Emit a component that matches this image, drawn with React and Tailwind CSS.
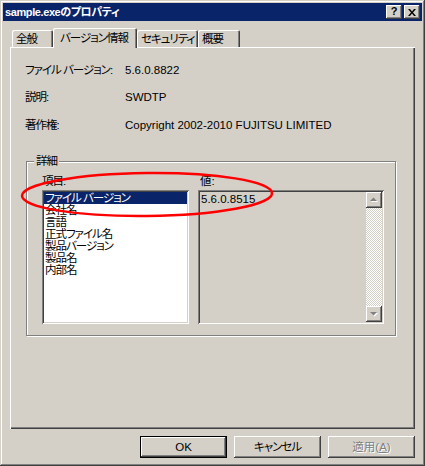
import React from 'react';

// --- classic 3D borders ---
const raised = 'shadow-[inset_-1px_-1px_#404040,inset_1px_1px_#fff,inset_-2px_-2px_#808080,inset_2px_2px_#d4d0c8]';
const sunken = 'shadow-[inset_1px_1px_#808080,inset_-1px_-1px_#fff,inset_2px_2px_#404040,inset_-2px_-2px_#d4d0c8]';

const infoRows = [
  { label: 'ファイル バージョン:', value: '5.6.0.8822' },
  { label: '説明:', value: 'SWDTP' },
  { label: '著作権:', value: 'Copyright 2002-2010 FUJITSU LIMITED' },
];

const items = ['ファイル バージョン', '会社名', '言語', '正式ファイル名', '製品バージョン', '製品名', '内部名'];

const tabs = [
  { label: '全般', w: 'w-[41px]' },
  { label: 'バージョン情報', w: 'w-[84px]', active: true },
  { label: 'セキュリティ', w: 'w-[61px]' },
  { label: '概要', w: 'w-[42px]' },
];

function Tab({ label, w, active }) {
  if (active) {
    return (
      <div className={`${w} h-[20px] -mb-px relative z-10 bg-[#d4d0c8] rounded-t-[2px] shadow-[inset_1px_1px_#fff,inset_-1px_0_#404040,inset_-2px_0_#808080] pl-[7px] pt-[4px] whitespace-nowrap tracking-[-1px]`}>
        {label}
      </div>
    );
  }
  return (
    <div className={`${w} h-[17px] bg-[#d4d0c8] rounded-t-[2px] shadow-[inset_1px_1px_#fff,inset_-1px_0_#404040,inset_-2px_0_#808080] pl-[4px] pt-[3px] whitespace-nowrap tracking-[-1px]`}>
      {label}
    </div>
  );
}

function ScrollArrow({ down }) {
  return (
    <div className={`w-[16px] h-[16px] bg-[#d4d0c8] ${raised} flex items-center justify-center`}>
      <svg width="8" height="6" viewBox="0 0 8 6">
        {down ? (
          <>
            <polygon points="1,2 8,2 4.5,5.5" fill="#fff" />
            <polygon points="0,1 7,1 3.5,4.5" fill="#808080" />
          </>
        ) : (
          <>
            <polygon points="4.5,1.5 8,5 1,5" fill="#fff" />
            <polygon points="3.5,0.5 7,4 0,4" fill="#808080" />
          </>
        )}
      </svg>
    </div>
  );
}

export default function App() {
  return (
    <div className={`relative w-[425px] h-[466px] bg-[#d4d0c8] p-[3px] flex flex-col text-[11.5px] leading-[12px] text-black font-['Liberation_Sans','Noto_Sans_CJK_JP',sans-serif] [font-feature-settings:'palt'] shadow-[inset_-1px_-1px_#404040,inset_1px_1px_#d4d0c8,inset_-2px_-2px_#808080,inset_2px_2px_#fff]`}>
      {/* Title bar */}
      <div className="h-[18px] bg-[#0a246a] flex items-center pl-[2px] pr-[2px]">
        <span className="text-white font-bold text-[11px] whitespace-nowrap tracking-[-0.4px]">sample.exeのプロパティ</span>
        <div className="ml-auto flex gap-[2px]">
          <div className={`w-[16px] h-[14px] bg-[#d4d0c8] ${raised} flex items-center justify-center font-bold text-[11px] leading-none pb-px`}>?</div>
          <div className={`w-[16px] h-[14px] bg-[#d4d0c8] ${raised} flex items-center justify-center`}>
            <svg width="8" height="7" viewBox="0 0 8 7">
              <path d="M0 0h2l2 2.5L6 0h2L5 3.5 8 7H6L4 4.5 2 7H0l3-3.5z" fill="#000" />
            </svg>
          </div>
        </div>
      </div>

      {/* Body */}
      <div className="flex-1 px-[7px] pt-[7px] flex flex-col">
        <div className="flex items-end h-[19px] pl-[2px]">
          {tabs.map((t) => (
            <Tab key={t.label} {...t} />
          ))}
        </div>

        <div className="h-[382px] bg-[#d4d0c8] shadow-[inset_1px_1px_#fff,inset_-1px_-1px_#404040,inset_-2px_-2px_#808080] pl-[15px] pt-[17px] flex flex-col">
          {infoRows.map((r, i) => (
            <div key={r.label} className={`flex h-[12px] whitespace-nowrap ${i === 0 ? '' : i === 1 ? 'mt-[15px]' : 'mt-[16px]'}`}>
              <span className="w-[100px] shrink-0 tracking-[-1px]">{r.label}</span>
              <span>{r.value}</span>
            </div>
          ))}

          {/* 詳細 group */}
          <div className="relative ml-px mt-[30px] w-[370px] h-[175px] border border-[#808080] shadow-[inset_1px_1px_#fff,1px_1px_#fff] pl-[15px] pt-[13px]">
            <span className="absolute left-[7px] -top-[7px] bg-[#d4d0c8] px-[2px] tracking-[-1px]">詳細</span>
            <div className="flex">
              <div className="w-[147px] flex flex-col">
                <span className="h-[12px] tracking-[-1px]">項目:</span>
                <div className={`mt-[3px] h-[134px] bg-white ${sunken} p-[2px] tracking-[-1px]`}>
                  {items.map((it, i) => (
                    <div key={it} className={`h-[12px] pl-px whitespace-nowrap ${i === 0 ? 'bg-[#0a246a] text-white' : ''}`}>
                      {it}
                    </div>
                  ))}
                </div>
              </div>
              <div className="ml-[9px] w-[186px] flex flex-col">
                <span className="h-[12px] pl-[2px]">値:</span>
                <div className={`mt-[3px] h-[134px] bg-[#d4d0c8] ${sunken} p-[2px] flex`}>
                  <div className="flex-1 pl-px pt-px">5.6.0.8515</div>
                  <div className="w-[16px] flex flex-col">
                    <ScrollArrow />
                    <div className="flex-1 bg-[repeating-conic-gradient(#fff_0_25%,#d4d0c8_0_50%)] bg-[length:2px_2px]" />
                    <ScrollArrow down />
                  </div>
                </div>
              </div>
            </div>
          </div>
        </div>

        {/* Buttons */}
        <div className="mt-[7px] flex justify-end gap-[7px]">
          <div className="w-[87px] h-[22px] border border-black">
            <div className={`w-full h-full ${raised} flex items-center justify-center`}>OK</div>
          </div>
          <div className={`w-[87px] h-[22px] ${raised} flex items-center justify-center tracking-[-1px]`}>キャンセル</div>
          <div className={`w-[87px] h-[22px] ${raised} flex items-center justify-center text-[#808080] [text-shadow:1px_1px_#fff]`}>
            適用(<span className="underline">A</span>)
          </div>
        </div>
      </div>

      {/* hand-drawn red ellipse over the selected item */}
      <svg className="absolute left-0 top-0 pointer-events-none" width="425" height="466">
        <ellipse cx="147" cy="194.5" rx="125" ry="21.5" fill="none" stroke="#f00" strokeWidth="2.5" transform="rotate(-0.6 147 194.5)" />
      </svg>
    </div>
  );
}
